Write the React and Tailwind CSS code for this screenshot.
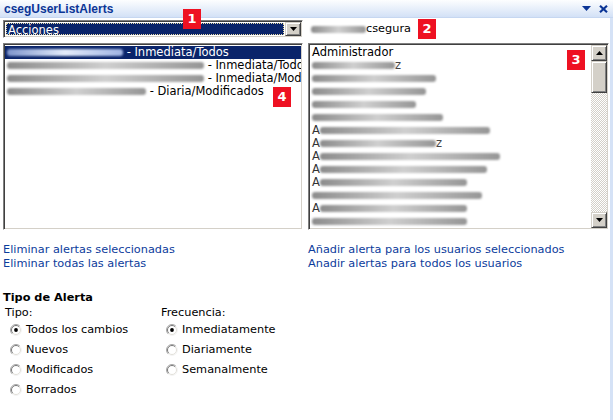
import React from "react";

const sunken =
  "border border-t-[#808080] border-l-[#808080] border-r-white border-b-white shadow-[inset_1px_1px_#404040,inset_-1px_-1px_#d4d0c8]";
const raised =
  "border border-t-[#d4d0c8] border-l-[#d4d0c8] border-r-[#404040] border-b-[#404040] shadow-[inset_1px_1px_#ffffff,inset_-1px_-1px_#808080] bg-[#d4d0c8]";

function Blur({ w, sel }) {
  return (
    <span
      className={
        "inline-block shrink-0 align-middle h-[7px] rounded-[3px] blur-[1px] bg-linear-to-r " +
        (sel
          ? "from-[#7f95cc] via-[#e4ecfa] to-[#9fb3e2]"
          : "from-[#8c8c8c] via-[#cfcfcf] to-[#969696]")
      }
      style={{ width: w }}
    />
  );
}

function Badge({ n, className }) {
  return (
    <div
      className={
        "absolute w-[18px] h-[20px] bg-[#ee1122] text-white font-bold text-[13px] leading-[20px] text-center font-['DejaVu_Sans',sans-serif] " +
        className
      }
    >
      {n}
    </div>
  );
}

function Radio({ checked, label }) {
  return (
    <div className="flex items-center h-[20px] pl-[7px]">
      <svg width="12" height="12" viewBox="0 0 12 12" className="shrink-0">
        <circle cx="6" cy="6" r="5" fill="#ffffff" />
        <path d="M9.9 2.1 A5.5 5.5 0 0 0 2.1 9.9" fill="none" stroke="#a8a8a8" strokeWidth="1" />
        <path d="M2.1 9.9 A5.5 5.5 0 0 0 9.9 2.1" fill="none" stroke="#f4f4f4" strokeWidth="1" />
        <path d="M9.2 2.8 A4.5 4.5 0 0 0 2.8 9.2" fill="none" stroke="#7a7a7a" strokeWidth="1" />
        <path d="M2.8 9.2 A4.5 4.5 0 0 0 9.2 2.8" fill="none" stroke="#e2e0da" strokeWidth="1" />
        {checked && <circle cx="6" cy="6" r="1.9" fill="#000000" />}
      </svg>
      <span className="ml-[4px] leading-[14px] text-black">{label}</span>
    </div>
  );
}

const leftRows = [
  { w: 116, t: " - Inmediata/Todos", sel: true },
  { w: 197, t: " - Inmediata/Todos" },
  { w: 197, t: " - Inmediata/Modificados" },
  { w: 139, t: " - Diaria/Modificados" },
];

const rightRows = [
  { a: false, w: 0, t: "Administrador" },
  { a: false, w: 83, end: "z" },
  { a: false, w: 124 },
  { a: false, w: 114 },
  { a: false, w: 104 },
  { a: false, w: 131 },
  { a: true, w: 170 },
  { a: true, w: 116, end: "z" },
  { a: true, w: 180 },
  { a: true, w: 167 },
  { a: true, w: 147 },
  { a: false, w: 170 },
  { a: true, w: 147 },
  { a: false, w: 155 },
];

export default function App() {
  return (
    <div className="w-[613px] h-[420px] bg-white relative overflow-hidden font-['DejaVu_Sans',sans-serif] text-[11.3px] text-black">
      {/* Title bar */}
      <div className="h-[18px] flex items-center justify-between pl-[4px] pr-[5px] bg-linear-to-b from-[#fdfeff] to-[#d3e1f6] border-b border-[#c6d7f1]">
        <span className="font-bold text-[12px] leading-[14px] text-[#0b3596] font-['Liberation_Sans',sans-serif]">
          csegUserListAlerts
        </span>
        <div className="flex items-center gap-[7px]">
          <svg width="10" height="6" viewBox="0 0 10 6">
            <path d="M0 0 H9 L4.5 5 Z" fill="#0b3596" />
          </svg>
          <svg width="9" height="8" viewBox="0 0 9 8">
            <path d="M1 0.8 L8 7.2 M8 0.8 L1 7.2" stroke="#0b3596" strokeWidth="2.2" />
          </svg>
        </div>
      </div>

      {/* Body */}
      <div className="h-[402px] border-r-[3px] border-[#d5e2f6] pl-[3px] pt-[2px]">
        {/* Row 1 */}
        <div className="flex items-center h-[18px]">
          <div className={"w-[300px] h-[18px] flex bg-white p-[1px] " + sunken}>
            <div className="flex-1 p-[1px]">
              <div className="h-full bg-[#0a246a] border border-dotted border-[#e8dca8] text-white leading-[12px] pl-[1px] text-[11.5px]">
                Acciones
              </div>
            </div>
            <div className={"w-[16px] h-full flex items-center justify-center " + raised}>
              <svg width="7" height="4" viewBox="0 0 7 4">
                <path d="M0 0 H7 L3.5 4 Z" fill="#000000" />
              </svg>
            </div>
          </div>
          <div className="ml-[8px] flex items-center">
            <Blur w={55} />
            <span className="leading-[14px]">csegura</span>
          </div>
        </div>

        {/* Lists */}
        <div className="flex mt-[5px] gap-[5px] text-[11.5px]">
          <div className={"w-[300px] h-[187px] bg-white p-[1px] " + sunken}>
            <div className="h-full overflow-hidden pt-[1px]">
              {leftRows.map((r, i) => (
                <div
                  key={i}
                  className={
                    "h-[13px] leading-[13px] pl-[2px] whitespace-nowrap overflow-hidden flex items-center " +
                    (r.sel ? "bg-[#0a246a] text-white" : "text-black")
                  }
                >
                  <Blur w={r.w} sel={r.sel} />
                  <span className="whitespace-pre">{r.t}</span>
                </div>
              ))}
            </div>
          </div>

          <div className={"w-[301px] h-[187px] bg-white p-[1px] flex " + sunken}>
            <div className="flex-1 overflow-hidden pl-[2px] pt-[1px]">
              {rightRows.map((r, i) => (
                <div key={i} className="h-[13px] leading-[13px] whitespace-nowrap flex items-center">
                  {r.t ? (
                    <span>{r.t}</span>
                  ) : (
                    <>
                      {r.a && <span className="text-[#333]">A</span>}
                      <Blur w={r.w} />
                      {r.end && <span className="text-[#444]">{r.end}</span>}
                    </>
                  )}
                </div>
              ))}
            </div>
            <div className="w-[16px] h-full flex flex-col">
              <div className={"h-[16px] flex items-center justify-center " + raised}>
                <svg width="7" height="4" viewBox="0 0 7 4">
                  <path d="M0 4 H7 L3.5 0 Z" fill="#000000" />
                </svg>
              </div>
              <div className={"h-[32px] " + raised} />
              <div className="flex-1 bg-[repeating-conic-gradient(#d4d0c8_0%_25%,#ffffff_0%_50%)] bg-[length:2px_2px]" />
              <div className={"h-[16px] flex items-center justify-center " + raised}>
                <svg width="7" height="4" viewBox="0 0 7 4">
                  <path d="M0 0 H7 L3.5 4 Z" fill="#000000" />
                </svg>
              </div>
            </div>
          </div>
        </div>

        {/* Links */}
        <div className="grid grid-cols-[305px_1fr] mt-[13px] text-[#0c3c9c] leading-[14px]">
          <div className="flex flex-col">
            <span>Eliminar alertas seleccionadas</span>
            <span>Eliminar todas las alertas</span>
          </div>
          <div className="flex flex-col">
            <span>Añadir alerta para los usuarios seleccionados</span>
            <span>Anadir alertas para todos los usuarios</span>
          </div>
        </div>

        {/* Tipo de alerta */}
        <div className="mt-[20px]">
          <div className="font-bold leading-[14px]">Tipo de Alerta</div>
          <div className="flex mt-[1px]">
            <div className="w-[156px] flex flex-col">
              <div className="pl-[2px] leading-[14px]">Tipo:</div>
              <Radio checked label="Todos los cambios" />
              <Radio label="Nuevos" />
              <Radio label="Modificados" />
              <Radio label="Borrados" />
            </div>
            <div className="flex flex-col">
              <div className="pl-[2px] leading-[14px]">Frecuencia:</div>
              <Radio checked label="Inmediatamente" />
              <Radio label="Diariamente" />
              <Radio label="Semanalmente" />
            </div>
          </div>
        </div>
      </div>

      <Badge n="1" className="left-[183px] top-[9px]" />
      <Badge n="2" className="left-[418px] top-[19px]" />
      <Badge n="3" className="left-[567px] top-[50px]" />
      <Badge n="4" className="left-[273px] top-[87px]" />
    </div>
  );
}
